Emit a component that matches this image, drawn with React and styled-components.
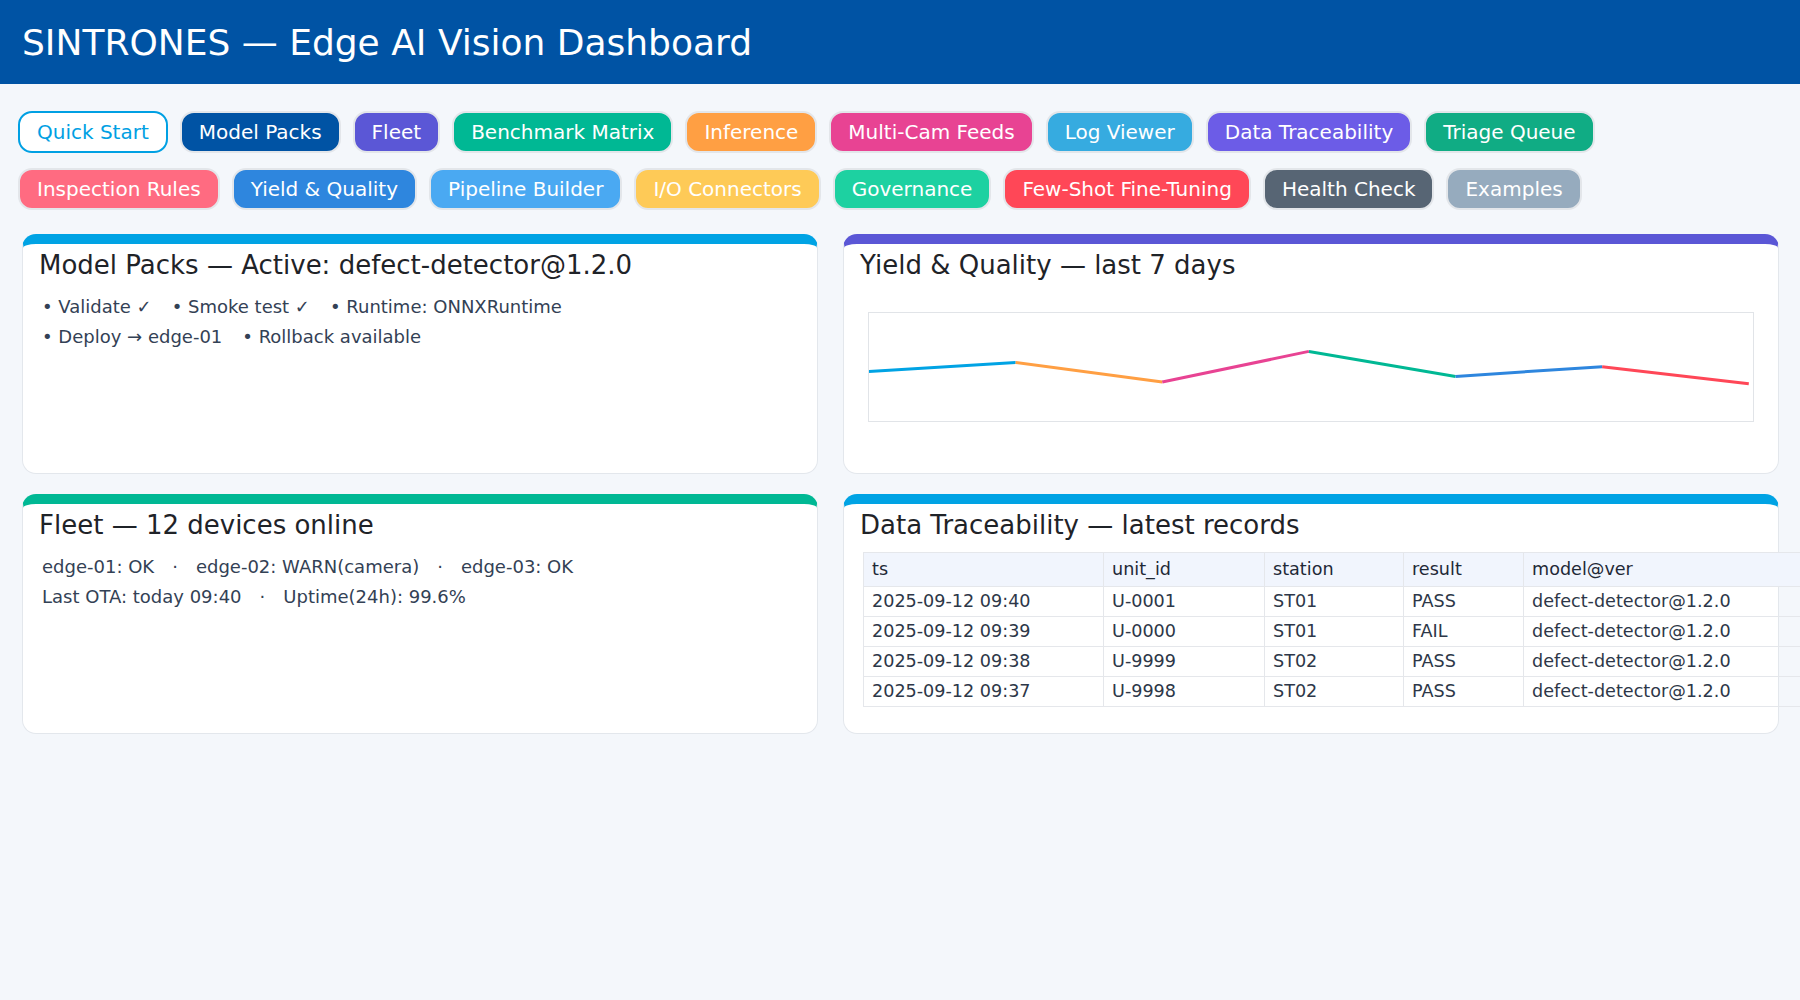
import React from 'react';
import styled, { createGlobalStyle } from 'styled-components';

const GlobalStyle = createGlobalStyle`
  html, body { margin: 0; padding: 0; background: #f4f7fb; overflow-x: hidden; }
  body { font-family: "DejaVu Sans", "Noto Sans", sans-serif; color: #2d3748; }
  *, *::before, *::after { box-sizing: border-box; }
`;

const Page = styled.div`
  min-height: 1000px;
  background: #f4f7fb;
`;

const Header = styled.header`
  background: #0053a4;
  padding: 22px 22px 21px;
`;

const Title = styled.h1`
  margin: 0;
  font-size: 36px;
  font-weight: 400;
  line-height: normal;
  color: #ffffff;
`;

const Nav = styled.nav`
  display: flex;
  flex-wrap: wrap;
  gap: 15px 12px;
  padding: 27px 18px 0;
`;

const Pill = styled.button`
  font-family: inherit;
  font-size: 20px;
  line-height: 24px;
  padding: 7px 17px;
  border-radius: 14px;
  border: 2px solid ${(p) => (p.$outline ? p.$bg : '#e3e6ea')};
  background: ${(p) => (p.$outline ? '#ffffff' : p.$bg)};
  color: ${(p) => (p.$outline ? p.$bg : '#ffffff')};
  cursor: pointer;
  white-space: nowrap;
`;

const Grid = styled.main`
  display: grid;
  grid-template-columns: minmax(0, 796fr) minmax(0, 936fr);
  gap: 20px 25px;
  padding: 24px 21px 0 22px;
`;

const Card = styled.section`
  height: 240px;
  background: #ffffff;
  border: 1px solid #e3e7ec;
  border-top: 10px solid ${(p) => p.$accent};
  border-radius: 14px;
  padding: 6px 16px 16px;
  min-width: 0;
`;

const CardTitle = styled.h2`
  margin: 0 0 12px;
  font-size: 26px;
  font-weight: 400;
  line-height: 30px;
  color: #1f2328;
  white-space: nowrap;
`;

const InfoRow = styled.div`
  display: flex;
  padding-left: 3px;
  font-size: 18px;
  line-height: 30px;
  color: #334155;
  white-space: nowrap;
`;

const Item = styled.span`
  margin-right: 20px;
`;

const Sep = styled.span`
  margin: 0 18px;
`;

const ChartFrame = styled.div`
  margin: 32px 8px 0;
  height: 110px;
  border: 1px solid #e1e4e8;
  background: #ffffff;
`;

const ChartSvg = styled.svg`
  display: block;
  width: 100%;
  height: 100%;
`;

const Table = styled.table`
  border-collapse: collapse;
  table-layout: fixed;
  width: 980px;
  margin-left: 3px;
  font-size: 17.6px;
  line-height: 21px;
`;

const Col = styled.col`
  width: ${(p) => p.$w}px;
`;

const Th = styled.th`
  background: #f1f5fd;
  font-weight: 400;
  text-align: left;
  padding: 6px 8px;
  border: 1px solid #e5e7eb;
  color: #1f2937;
  white-space: nowrap;
`;

const Td = styled.td`
  padding: 4px 8px;
  border: 1px solid #e5e7eb;
  color: #2d3748;
  white-space: nowrap;
`;

const pills = [
  ['Quick Start', '#00a0e3', true],
  ['Model Packs', '#0053a4'],
  ['Fleet', '#5b57d6'],
  ['Benchmark Matrix', '#00b894'],
  ['Inference', '#ff9f43'],
  ['Multi-Cam Feeds', '#e84393'],
  ['Log Viewer', '#36abe0'],
  ['Data Traceability', '#6c5ce7'],
  ['Triage Queue', '#10ac84'],
  ['Inspection Rules', '#ff6b81'],
  ['Yield & Quality', '#2e86de'],
  ['Pipeline Builder', '#4aa9f2'],
  ['I/O Connectors', '#feca57'],
  ['Governance', '#1dd1a1'],
  ['Few-Shot Fine-Tuning', '#ff4757'],
  ['Health Check', '#576574'],
  ['Examples', '#96abbe'],
];

const chartY = [58.4, 49.4, 69, 38.4, 63.4, 53.7, 70.7];
const chartColors = ['#00a3e4', '#ff9f43', '#e84393', '#00b894', '#2e86de', '#ff4757'];
const STEP = 146.8;

const rows = [
  ['2025-09-12 09:40', 'U-0001', 'ST01', 'PASS', 'defect-detector@1.2.0'],
  ['2025-09-12 09:39', 'U-0000', 'ST01', 'FAIL', 'defect-detector@1.2.0'],
  ['2025-09-12 09:38', 'U-9999', 'ST02', 'PASS', 'defect-detector@1.2.0'],
  ['2025-09-12 09:37', 'U-9998', 'ST02', 'PASS', 'defect-detector@1.2.0'],
];

const colWidths = [240, 161, 139, 120, 320];
const headers = ['ts', 'unit_id', 'station', 'result', 'model@ver'];

export default function App() {
  return (
    <Page>
      <GlobalStyle />
      <Header>
        <Title>SINTRONES — Edge AI Vision Dashboard</Title>
      </Header>
      <Nav>
        {pills.map(([label, color, outline]) => (
          <Pill key={label} $bg={color} $outline={outline}>
            {label}
          </Pill>
        ))}
      </Nav>
      <Grid>
        <Card $accent="#00a3e4">
          <CardTitle>Model Packs — Active: defect-detector@1.2.0</CardTitle>
          <InfoRow>
            <Item>• Validate ✓</Item>
            <Item>• Smoke test ✓</Item>
            <Item>• Runtime: ONNXRuntime</Item>
          </InfoRow>
          <InfoRow>
            <Item>• Deploy → edge-01</Item>
            <Item>• Rollback available</Item>
          </InfoRow>
        </Card>
        <Card $accent="#5b57d6">
          <CardTitle>Yield &amp; Quality — last 7 days</CardTitle>
          <ChartFrame>
            <ChartSvg viewBox="0 0 885 108" preserveAspectRatio="none">
              {chartColors.map((c, i) => (
                <line
                  key={c + i}
                  x1={i * STEP}
                  y1={chartY[i]}
                  x2={(i + 1) * STEP}
                  y2={chartY[i + 1]}
                  stroke={c}
                  strokeWidth="3"
                  vectorEffect="non-scaling-stroke"
                />
              ))}
            </ChartSvg>
          </ChartFrame>
        </Card>
        <Card $accent="#00b894">
          <CardTitle>Fleet — 12 devices online</CardTitle>
          <InfoRow>
            <span>edge-01: OK</span>
            <Sep>·</Sep>
            <span>edge-02: WARN(camera)</span>
            <Sep>·</Sep>
            <span>edge-03: OK</span>
          </InfoRow>
          <InfoRow>
            <span>Last OTA: today 09:40</span>
            <Sep>·</Sep>
            <span>Uptime(24h): 99.6%</span>
          </InfoRow>
        </Card>
        <Card $accent="#00a3e4">
          <CardTitle>Data Traceability — latest records</CardTitle>
          <Table>
            <colgroup>
              {colWidths.map((w, i) => (
                <Col key={i} $w={w} />
              ))}
            </colgroup>
            <thead>
              <tr>
                {headers.map((h) => (
                  <Th key={h}>{h}</Th>
                ))}
              </tr>
            </thead>
            <tbody>
              {rows.map((r) => (
                <tr key={r[0]}>
                  {r.map((c, i) => (
                    <Td key={i}>{c}</Td>
                  ))}
                </tr>
              ))}
            </tbody>
          </Table>
        </Card>
      </Grid>
    </Page>
  );
}
